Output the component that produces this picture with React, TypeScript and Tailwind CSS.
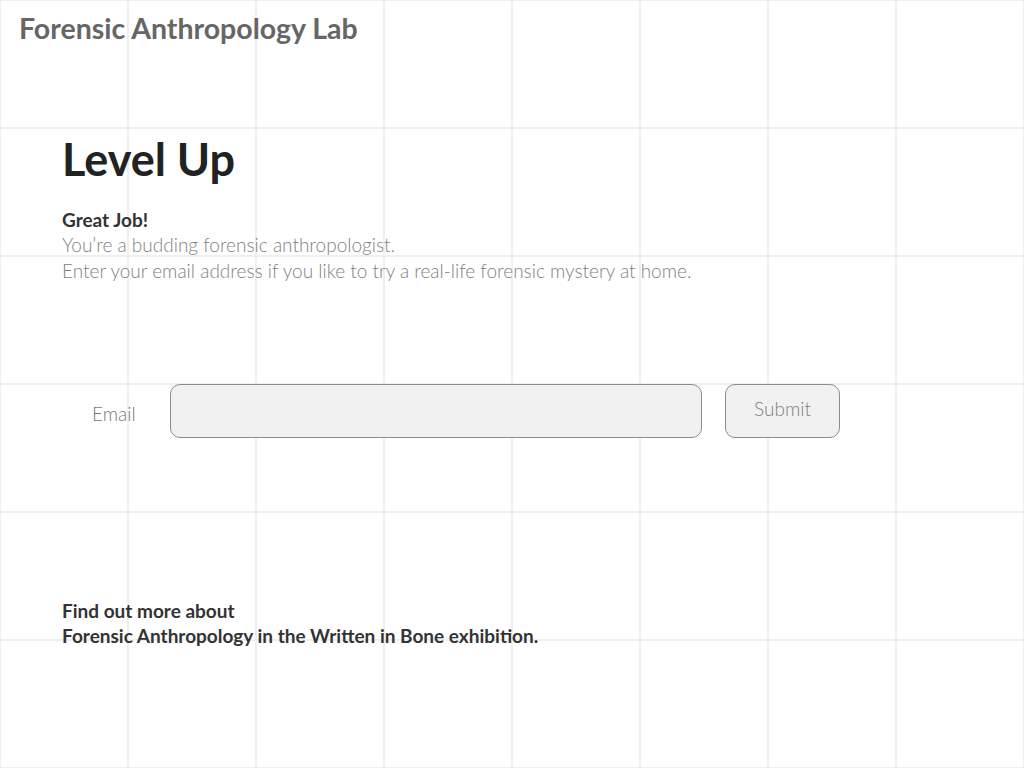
export default function App() {
  return (
    <div
      className="h-[768px] w-[1024px] overflow-hidden bg-white bg-[linear-gradient(to_right,#efefef_2px,transparent_2px),linear-gradient(to_bottom,#efefef_2px,transparent_2px)] bg-[size:128px_128px] bg-[position:-1px_-1px] font-['Lato','Liberation_Sans',sans-serif]"
    >
      <header className="px-[19px] pt-[10px]">
        <h1 className="text-[28.5px] font-bold leading-[36px] text-[#666666]">Forensic Anthropology Lab</h1>
      </header>

      <main className="px-[62px]">
        <h2 className="mt-[85px] text-[45px] font-bold leading-[56px] text-[#222222]">Level Up</h2>

        <div className="mt-[20px] text-[19px] leading-[26px]">
          <p className="font-bold leading-[25px] text-[#333333]">Great Job!</p>
          <p className="font-light text-[#7f7f7f]">You’re a budding forensic anthropologist.</p>
          <p className="font-light text-[#7f7f7f]">
            Enter your email address if you like to try a real-life forensic mystery at home.
          </p>
        </div>

        <form className="mt-[100px] flex items-start" onSubmit={(e) => e.preventDefault()}>
          <label htmlFor="email" className="ml-[30px] mt-[17px] w-[78px] text-[19px] font-light leading-[26px] text-[#777777]">
            Email
          </label>
          <input
            id="email"
            type="email"
            className="h-[54px] w-[532px] rounded-[10px] border border-[#8c8c8c] bg-[#f1f1f1] px-3 outline-none"
          />
          <button
            type="submit"
            className="ml-[23px] h-[54px] w-[115px] rounded-[10px] border border-[#8c8c8c] bg-[#f1f1f1] pb-[4px] text-[19px] font-light text-[#7f7f7f]"
          >
            Submit
          </button>
        </form>

        <div className="mt-[160px] text-[19px] font-bold leading-[25px] text-[#333333]">
          <p>Find out more about</p>
          <p>Forensic Anthropology in the Written in Bone exhibition.</p>
        </div>
      </main>
    </div>
  );
}
